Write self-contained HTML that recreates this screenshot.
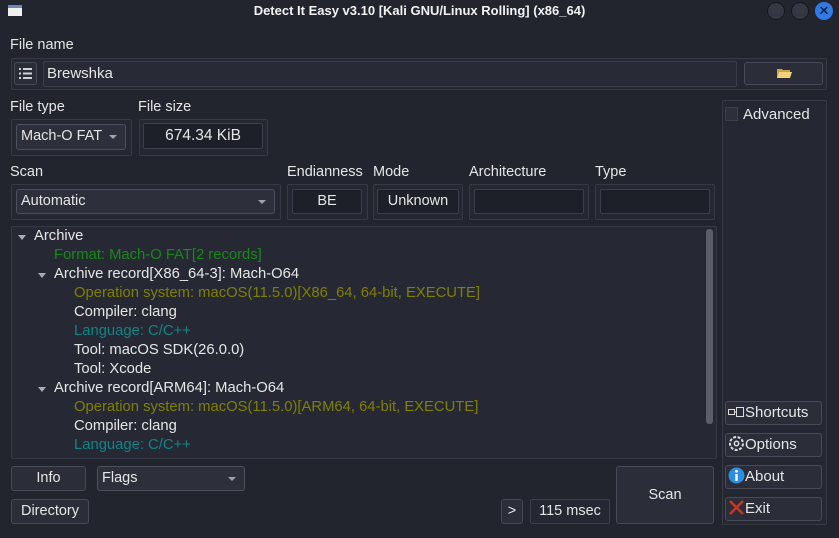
<!DOCTYPE html>
<html><head><meta charset="utf-8"><style>
*{box-sizing:border-box;margin:0;padding:0}
body{width:839px;height:538px;background:#22252e;color:#e6e6e6;font-family:"Liberation Sans","DejaVu Sans",sans-serif;font-size:14.5px;position:relative;overflow:hidden}
.a{position:absolute;white-space:nowrap}
.fr{position:absolute;border:1px solid #363a45;border-radius:2px;background:#252832}
.f{position:absolute;border:1px solid #3b3f4a;border-radius:2px;background:#1d2028;text-align:center;line-height:23px}
.b{position:absolute;border:1px solid #474b56;border-radius:3px;background:#2b2e38;text-align:center;line-height:23px}
.c{position:absolute;border:1px solid #4c505b;border-radius:3px;background:#2d303a;line-height:23px;padding-left:4px}
.c:after{content:"";position:absolute;right:8px;top:10px;border-left:4px solid transparent;border-right:4px solid transparent;border-top:4px solid #a0a3aa}
.t{position:absolute;left:0;white-space:nowrap;line-height:19px;font-size:14.8px}
.g{color:#168a16}.o{color:#808000}.tl{color:#0f8585}
.tri{position:absolute;border-left:4px solid transparent;border-right:4px solid transparent;border-top:5px solid #a8abb2}
</style></head><body>
<div class="a" style="left:8px;top:5px;width:14px;height:11px;background:#f0f0f0;border-top:3px solid #6a88b8"></div>
<div class="a" style="left:0;width:839px;top:3px;text-align:center;font-weight:bold;font-size:13px;color:#f2f2f2">Detect It Easy v3.10 [Kali GNU/Linux Rolling] (x86_64)</div>
<div class="a" style="left:767px;top:2px;width:18px;height:18px;border-radius:50%;background:#353944;border:1px solid #15171c"></div>
<div class="a" style="left:791px;top:2px;width:18px;height:18px;border-radius:50%;background:#353944;border:1px solid #15171c"></div>
<div class="a" style="left:815px;top:2px;width:18px;height:18px;border-radius:50%;background:#2f7ae5;color:#0b0f1a;font-weight:bold;font-size:13px;text-align:center;line-height:18px">✕</div>

<div class="a" style="left:10px;top:37px">File name</div>
<div class="fr" style="left:11px;top:58px;width:816px;height:32px"></div>
<div class="b" style="left:14px;top:62px;width:23px;height:23px;background:#2a2d36"><svg width="19" height="19" viewBox="0 0 19 19" style="margin-top:1px"><g fill="#cfd2d8"><rect x="3" y="4" width="2" height="2"/><rect x="7" y="4" width="9" height="2"/><rect x="3" y="8.5" width="2" height="2"/><rect x="7" y="8.5" width="9" height="2"/><rect x="3" y="13" width="2" height="2"/><rect x="7" y="13" width="9" height="2"/></g></svg></div>
<div class="f" style="left:43px;top:61px;width:694px;height:26px;text-align:left;padding-left:3px;line-height:24px;font-size:15px;background:#282b35">Brewshka</div>
<div class="b" style="left:744px;top:62px;width:79px;height:23px"><svg width="16" height="12" viewBox="0 0 16 12" style="vertical-align:middle;margin-top:-3px"><path d="M1 2h5l1 1h7v8H1z" fill="#c9a24a"/><path d="M3 5h13l-2 6H1z" fill="#f2d27a"/></svg></div>

<div class="a" style="left:10px;top:99px">File type</div>
<div class="a" style="left:138px;top:99px">File size</div>
<div class="fr" style="left:11px;top:119px;width:121px;height:37px"></div>
<div class="c" style="left:16px;top:124px;width:110px;height:26px">Mach-O FAT</div>
<div class="fr" style="left:139px;top:119px;width:129px;height:37px"></div>
<div class="f" style="left:143px;top:123px;width:120px;height:26px;font-size:15.5px">674.34 KiB</div>

<div class="fr" style="left:722px;top:100px;width:105px;height:425px"></div>
<div class="a" style="left:725px;top:107px;width:13px;height:14px;background:#2d303a;border:1px solid #3b3f4a"></div>
<div class="a" style="left:743px;top:106px;font-size:15px">Advanced</div>

<div class="a" style="left:10px;top:164px">Scan</div>
<div class="a" style="left:287px;top:164px">Endianness</div>
<div class="a" style="left:373px;top:164px">Mode</div>
<div class="a" style="left:469px;top:164px">Architecture</div>
<div class="a" style="left:595px;top:164px">Type</div>
<div class="fr" style="left:11px;top:184px;width:270px;height:36px"></div>
<div class="c" style="left:16px;top:189px;width:259px;height:25px">Automatic</div>
<div class="fr" style="left:287px;top:184px;width:81px;height:36px"></div>
<div class="f" style="left:292px;top:189px;width:70px;height:25px">BE</div>
<div class="fr" style="left:373px;top:184px;width:90px;height:36px"></div>
<div class="f" style="left:377px;top:189px;width:82px;height:25px">Unknown</div>
<div class="fr" style="left:469px;top:184px;width:120px;height:36px"></div>
<div class="f" style="left:474px;top:189px;width:110px;height:25px"></div>
<div class="fr" style="left:595px;top:184px;width:120px;height:36px"></div>
<div class="f" style="left:600px;top:189px;width:110px;height:25px"></div>

<div class="fr" style="left:11px;top:226px;width:706px;height:233px;background:#262934;overflow:hidden">
<div class="a" style="left:694px;top:2px;width:7px;height:195px;background:#5a5e68;border-radius:3px"></div>
<div class="tri" style="left:6px;top:8px"></div>
<div class="t" style="left:22px;top:0">Archive</div>
<div class="t g" style="left:42px;top:19px">Format: Mach-O FAT[2 records]</div>
<div class="tri" style="left:26px;top:46px"></div>
<div class="t" style="left:42px;top:38px">Archive record[X86_64-3]: Mach-O64</div>
<div class="t o" style="left:62px;top:57px">Operation system: macOS(11.5.0)[X86_64, 64-bit, EXECUTE]</div>
<div class="t" style="left:62px;top:76px">Compiler: clang</div>
<div class="t tl" style="left:62px;top:95px">Language: C/C++</div>
<div class="t" style="left:62px;top:114px">Tool: macOS SDK(26.0.0)</div>
<div class="t" style="left:62px;top:133px">Tool: Xcode</div>
<div class="tri" style="left:26px;top:160px"></div>
<div class="t" style="left:42px;top:152px">Archive record[ARM64]: Mach-O64</div>
<div class="t o" style="left:62px;top:171px">Operation system: macOS(11.5.0)[ARM64, 64-bit, EXECUTE]</div>
<div class="t" style="left:62px;top:190px">Compiler: clang</div>
<div class="t tl" style="left:62px;top:209px">Language: C/C++</div>
</div>

<div class="b" style="left:11px;top:466px;width:75px;height:25px">Info</div>
<div class="c" style="left:97px;top:466px;width:148px;height:25px">Flags</div>
<div class="b" style="left:11px;top:499px;width:78px;height:25px">Directory</div>
<div class="b" style="left:501px;top:499px;width:22px;height:25px">&gt;</div>
<div class="f" style="left:530px;top:499px;width:80px;height:25px;background:#252832">115 msec</div>
<div class="b" style="left:616px;top:466px;width:98px;height:58px;line-height:56px">Scan</div>

<div class="b" style="left:725px;top:401px;width:97px;height:24px;text-align:left;padding-left:2px;line-height:22px;font-size:15px"><svg width="17" height="12" viewBox="0 0 17 12" style="vertical-align:-1px"><rect x="0.5" y="3.5" width="6" height="5" fill="none" stroke="#ddd"/><rect x="8.5" y="1.5" width="7" height="9" fill="none" stroke="#ddd"/><path d="M6 6h3" stroke="#ddd"/></svg>Shortcuts</div>
<div class="b" style="left:725px;top:433px;width:97px;height:24px;text-align:left;padding-left:2px;line-height:22px;font-size:15px"><svg width="17" height="17" viewBox="0 0 17 17" style="vertical-align:-3px"><circle cx="8.5" cy="8.5" r="6.5" fill="none" stroke="#ddd" stroke-width="2" stroke-dasharray="3 1.5"/><circle cx="8.5" cy="8.5" r="2.2" fill="none" stroke="#ddd" stroke-width="1.5"/></svg>Options</div>
<div class="b" style="left:725px;top:465px;width:97px;height:24px;text-align:left;padding-left:2px;line-height:22px;font-size:15px"><svg width="17" height="17" viewBox="0 0 17 17" style="vertical-align:-3px"><circle cx="8.5" cy="8.5" r="8" fill="#2a8fe0"/><rect x="7.3" y="7" width="2.4" height="7" fill="#fff"/><circle cx="8.5" cy="4.3" r="1.4" fill="#fff"/></svg>About</div>
<div class="b" style="left:725px;top:497px;width:97px;height:24px;text-align:left;padding-left:2px;line-height:22px;font-size:15px"><svg width="17" height="17" viewBox="0 0 17 17" style="vertical-align:-3px"><path d="M2 2L15 15M15 2L2 15" stroke="#c0392b" stroke-width="2.5"/></svg>Exit</div>
</body></html>
